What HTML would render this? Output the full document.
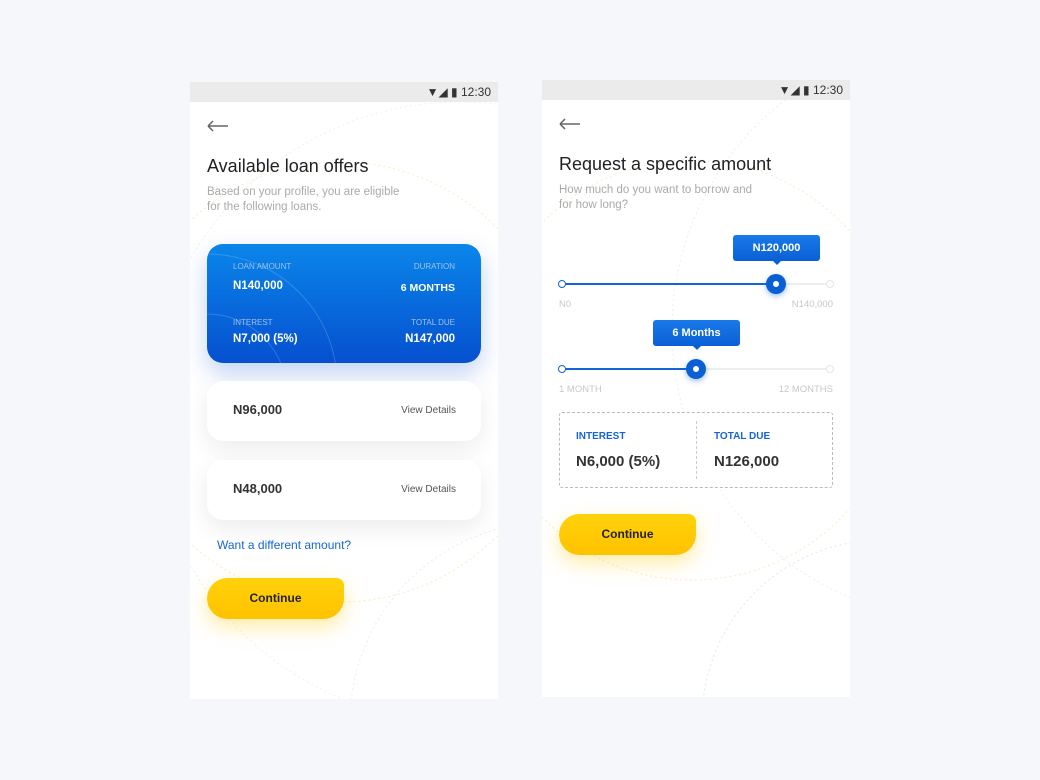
<!DOCTYPE html>
<html><head><meta charset="utf-8"><style>
*{margin:0;padding:0;box-sizing:border-box}
html,body{width:1040px;height:780px;overflow:hidden}
body{background:#f5f7fb;font-family:"Liberation Sans",sans-serif;position:relative}
.scr{position:absolute;width:308px;height:617px;background:#fff;overflow:hidden}
.sb{height:20px;background:#ebebeb;position:relative}
.sb span{position:absolute;right:7px;top:3px;font-size:12px;color:#333}
.abs{position:absolute}
h1{position:absolute;left:17px;font-size:18px;font-weight:normal;color:#222}
.sub{position:absolute;left:17px;font-size:11.5px;color:#aaa;line-height:15px}
.card{position:absolute;left:17px;width:274px;border-radius:16px;background:#fff;box-shadow:0 8px 24px rgba(0,0,0,.08)}
.btn{position:absolute;left:17px;width:137px;height:41px;border-radius:22px 8px 22px 22px;background:linear-gradient(#ffd20a,#ffc200);box-shadow:0 8px 20px rgba(255,200,0,.35);font-weight:bold;font-size:12px;color:#222;text-align:center;line-height:41px}
.lbl{position:absolute;font-size:8px;color:#9fc0f0}
.val{position:absolute;font-size:11.5px;font-weight:bold;color:#fff}
.tip{position:absolute;height:26px;border-radius:3px;background:linear-gradient(#1a7ae8,#0a5fd6);color:#fff;font-size:11px;font-weight:bold;text-align:center;line-height:26px}
.tip:after{content:"";position:absolute;left:50%;bottom:-4px;margin-left:-4px;border:4px solid transparent;border-bottom:0;border-top-color:#0a5fd6}
.track{position:absolute;height:2px;background:#eee}
.fill{position:absolute;height:2px;background:#1565d8}
.dot{position:absolute;width:8px;height:8px;border-radius:50%;border:1.5px solid #1565d8;background:#fff}
.knob{position:absolute;width:20px;height:20px;border-radius:50%;background:#0b5fd4;box-shadow:0 2px 6px rgba(11,95,212,.4)}
.knob:after{content:"";position:absolute;left:7px;top:7px;width:6px;height:6px;border-radius:50%;background:#fff}
.sm{position:absolute;font-size:9.5px;color:#c8c8c8}
</style></head><body>

<div class="scr" style="left:190px;top:82px">
<svg class="abs" style="left:0;top:0" width="308" height="617"><circle cx="270" cy="330" r="310" fill="none" stroke="#f0f0f0" stroke-dasharray="2 3"/><circle cx="150" cy="300" r="220" fill="none" stroke="#f8ecc4" stroke-dasharray="2 3"/><circle cx="360" cy="640" r="200" fill="none" stroke="#ececec" stroke-dasharray="2 3"/></svg>
<div class="sb"><span>▼◢ ▮ 12:30</span></div>
<svg class="abs" style="left:17px;top:38px" width="22" height="12"><path d="M1 6H21M1 6L6 1M1 6L6 11" stroke="#666" stroke-width="1.5" fill="none"/></svg>
<h1 style="top:74px">Available loan offers</h1>
<div class="sub" style="top:103px">Based on your profile, you are eligible<br>for the following loans.</div>
<div class="card" style="top:162px;height:119px;background:linear-gradient(#0a86ea,#0650cf);overflow:hidden;box-shadow:0 10px 24px rgba(6,80,207,.25)">
<svg class="abs" style="left:0;top:0" width="274" height="119"><circle cx="0" cy="140" r="130" fill="none" stroke="rgba(255,255,255,.18)"/><circle cx="0" cy="150" r="80" fill="none" stroke="rgba(255,255,255,.18)"/></svg>
<div class="lbl" style="left:26px;top:18px">LOAN AMOUNT</div>
<div class="lbl" style="right:26px;top:18px">DURATION</div>
<div class="val" style="left:26px;top:36px">N140,000</div>
<div class="val" style="right:26px;top:38px;font-size:10.5px">6 MONTHS</div>
<div class="lbl" style="left:26px;top:74px">INTEREST</div>
<div class="lbl" style="right:26px;top:74px">TOTAL DUE</div>
<div class="val" style="left:26px;top:89px">N7,000 (5%)</div>
<div class="val" style="right:26px;top:89px">N147,000</div>
</div>
<div class="card" style="top:299px;height:60px"><div class="abs" style="left:26px;top:21px;font-weight:bold;font-size:13px;color:#333">N96,000</div><div class="abs" style="right:25px;top:24px;font-size:10px;color:#555">View Details</div></div>
<div class="card" style="top:378px;height:60px"><div class="abs" style="left:26px;top:21px;font-weight:bold;font-size:13px;color:#333">N48,000</div><div class="abs" style="right:25px;top:24px;font-size:10px;color:#555">View Details</div></div>
<div class="abs" style="left:27px;top:456px;font-size:12px;color:#1565d8">Want a different amount?</div>
<div class="btn" style="top:496px">Continue</div>
</div>

<div class="scr" style="left:542px;top:80px">
<svg class="abs" style="left:0;top:0" width="308" height="617"><circle cx="420" cy="250" r="290" fill="none" stroke="#e8eff8" stroke-dasharray="2 3"/><circle cx="150" cy="290" r="210" fill="none" stroke="#f8ecc4" stroke-dasharray="2 3"/><circle cx="340" cy="640" r="180" fill="none" stroke="#dde8f5" stroke-dasharray="2 3"/></svg>
<div class="sb"><span>▼◢ ▮ 12:30</span></div>
<svg class="abs" style="left:17px;top:38px" width="22" height="12"><path d="M1 6H21M1 6L6 1M1 6L6 11" stroke="#666" stroke-width="1.5" fill="none"/></svg>
<h1 style="top:74px">Request a specific amount</h1>
<div class="sub" style="top:103px">How much do you want to borrow and<br>for how long?</div>
<div class="tip" style="left:191px;top:155px;width:87px">N120,000</div>
<div class="track" style="left:20px;top:203px;width:268px"></div>
<div class="fill" style="left:20px;top:203px;width:214px"></div>
<div class="dot" style="left:16px;top:200px"></div>
<div class="dot" style="left:284px;top:200px;border-color:#e5e5e5"></div>
<div class="knob" style="left:224px;top:194px"></div>
<div class="sm" style="left:17px;top:219px">N0</div>
<div class="sm" style="right:17px;top:219px">N140,000</div>
<div class="tip" style="left:111px;top:240px;width:87px">6 Months</div>
<div class="track" style="left:20px;top:288px;width:268px"></div>
<div class="fill" style="left:20px;top:288px;width:134px"></div>
<div class="dot" style="left:16px;top:285px"></div>
<div class="dot" style="left:284px;top:285px;border-color:#e5e5e5"></div>
<div class="knob" style="left:144px;top:279px"></div>
<div class="sm" style="left:17px;top:304px">1 MONTH</div>
<div class="sm" style="right:17px;top:304px">12 MONTHS</div>
<div class="abs" style="left:17px;top:332px;width:274px;height:76px;border:1px dashed #bbb;border-radius:3px;background:#fff"></div>
<div class="abs" style="left:154px;top:341px;height:58px;border-left:1px dashed #ccc"></div>
<div class="abs" style="left:34px;top:351px;font-size:10px;font-weight:bold;color:#1565d8">INTEREST</div>
<div class="abs" style="left:172px;top:351px;font-size:10px;font-weight:bold;color:#1565d8">TOTAL DUE</div>
<div class="abs" style="left:34px;top:373px;font-size:15px;font-weight:bold;color:#333">N6,000 (5%)</div>
<div class="abs" style="left:172px;top:373px;font-size:15px;font-weight:bold;color:#333">N126,000</div>
<div class="btn" style="top:434px">Continue</div>
</div>
</body></html>
